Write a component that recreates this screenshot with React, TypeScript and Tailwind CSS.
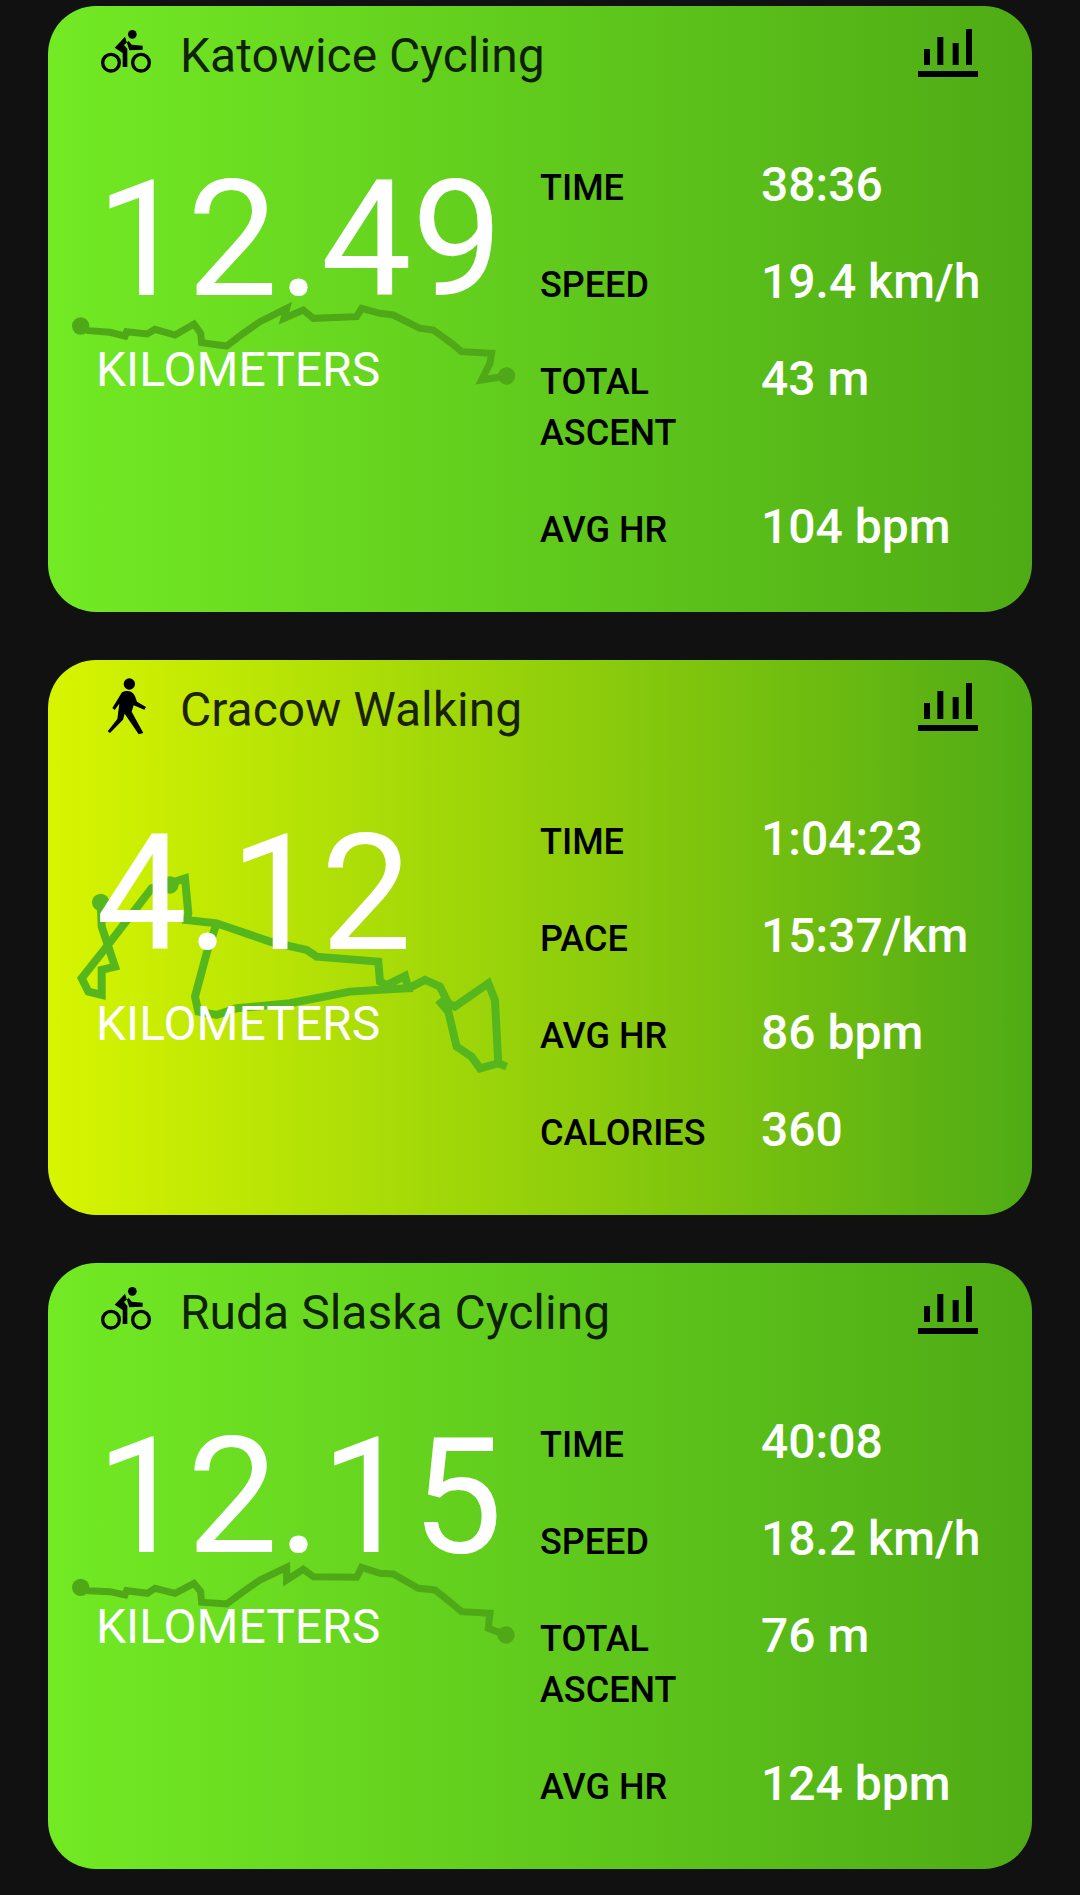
const roboto = "font-['Roboto',sans-serif]";

type Stat = { label: string[]; value: string };

interface ActivityProps {
  title: string;
  distance: string;
  kind: "bike" | "walk";
  stats: Stat[];
  route: React.ReactNode;
}

function BikeIcon() {
  return (
    <svg width={90} height={70} viewBox="0 0 270 210" className="shrink-0">
      <circle cx={93} cy={143} r={25} fill="none" stroke="#000" strokeWidth={10} />
      <circle cx={183} cy={143} r={25} fill="none" stroke="#000" strokeWidth={10} />
      <circle cx={157} cy={58} r={13} fill="#000" />
      <path
        d="M135 65 L104 98 L128 114 L128 156 L142 156 L142 102 L132 90 L146 78 L155 89 L188 92 L188 104 L148 106 Z"
        fill="#000"
      />
    </svg>
  );
}

function WalkIcon() {
  return (
    <span className="flex w-[90px] shrink-0 justify-center">
      <svg width={70} height={70} viewBox="0 0 210 210">
        <circle cx={118} cy={45} r={17} fill="#000" />
        <path
          d="M96 70 C110 62 129 65 135 82 L141 98 L168 114 L163 122 L131 109 L125 128 L160 192 L146 196 L104 134 L99 152 L60 192 L53 187 L82 150 L88 104 L74 123 L67 117 Z"
          fill="#000"
        />
      </svg>
    </span>
  );
}

function ChartIcon() {
  return (
    <svg width={90} height={70} viewBox="0 0 270 210" className="shrink-0">
      <rect x={72} y={102} width={18} height={48} fill="#000" />
      <rect x={112} y={66} width={18} height={84} fill="#000" />
      <rect x={158} y={84} width={18} height={66} fill="#000" />
      <rect x={198} y={42} width={18} height={108} fill="#000" />
      <rect x={54} y={168} width={180} height={18} fill="#000" />
    </svg>
  );
}

function ActivityCard({ title, distance, kind, stats, route }: ActivityProps) {
  return (
    <div
      className={
        "relative ml-[48px] w-[984px] overflow-hidden rounded-[48px] " +
        (kind === "bike"
          ? "bg-linear-to-r/srgb from-[#72ea24] to-[#4fab15]"
          : "bg-linear-to-r/srgb from-[#d8f500] to-[#4fab15]")
      }
    >
      {route}
      <div className="relative flex h-[99px] items-start pt-[9px] pl-[32px] pr-[42px]">
        {kind === "bike" ? <BikeIcon /> : <WalkIcon />}
        <div className="mt-[15px] ml-[10px] flex-1 text-[48px] leading-[52px] text-black/85">{title}</div>
        <ChartIcon />
      </div>
      <div className="relative flex pt-[58px] pb-[56px]">
        <div className="w-[492px] shrink-0 pl-[48px]">
          <div className="-mt-[7px] text-[162px] leading-[168px] font-normal text-white">{distance}</div>
          <div className="mt-[20px] text-[48px] leading-[52px] text-white">KILOMETERS</div>
        </div>
        <div className="grid grid-cols-[221px_1fr] gap-y-[46px]">
          {stats.map((s) => (
            <div key={s.value} className="contents">
              <div className="text-[36px] leading-[51px] font-medium text-black">
                {s.label.map((l) => (
                  <div key={l}>{l}</div>
                ))}
              </div>
              <div className="-mt-[4px] text-[48px] leading-[51px] font-medium text-white">{s.value}</div>
            </div>
          ))}
        </div>
      </div>
    </div>
  );
}

function RouteOne() {
  return (
    <svg className="absolute inset-0 h-full w-full" viewBox="0 0 984 606" preserveAspectRatio="xMinYMin">
      <g transform="translate(12 294) scale(0.3333)" fill="none" stroke="#4fa818" strokeWidth={21}>
        <polyline points="62,78 85,92 150,97 195,108 200,95 262,102 285,88 345,105 402,72 422,100 425,128 500,138 550,100 600,65 680,25 672,55 730,30 760,55 890,50 905,25 960,40 1000,45 1080,85 1120,90 1175,130 1205,155 1295,160 1290,190 1265,240 1340,228" />
        <circle cx={62} cy={78} r={26} fill="#4fa818" stroke="none" />
        <circle cx={1340} cy={228} r={26} fill="#4fa818" stroke="none" />
      </g>
    </svg>
  );
}

function RouteTwo() {
  return (
    <svg className="absolute inset-0 h-full w-full" viewBox="0 0 984 555" preserveAspectRatio="xMinYMin">
      <g transform="translate(-8 -10) scale(0.3333)" fill="none" stroke="#55b71d" strokeWidth={24}>
        <polyline points="182,757 185,830 225,950 185,960 185,1035 145,1025 125,985 200,890 335,715 390,700 435,685 445,790 440,810 530,820 690,875 800,900 830,920 1015,935 1020,995 1040,1005 1095,978 1105,1015 1045,1018 930,1025 750,1060 590,1075 530,1095 475,1085 465,1040 500,910 525,835 530,820" />
        <polyline points="1105,1015 1155,990 1200,1010 1225,1060 1245,1070 1345,1000 1365,1050 1375,1240 1320,1255 1295,1220 1250,1190 1225,1085 1195,1050" />
        <polyline points="1375,1240 1400,1250" />
        <circle cx={182} cy={757} r={26} fill="#55b71d" stroke="none" />
        <circle cx={390} cy={705} r={26} fill="#55b71d" stroke="none" />
      </g>
    </svg>
  );
}

function RouteThree() {
  return (
    <svg className="absolute inset-0 h-full w-full" viewBox="0 0 984 606" preserveAspectRatio="xMinYMin">
      <g transform="translate(12 297) scale(0.3333)" fill="none" stroke="#4fa818" strokeWidth={21}>
        <polyline points="62,82 85,92 150,95 195,105 200,92 262,100 285,85 345,100 402,70 422,95 425,127 500,132 550,95 600,60 680,22 680,60 730,28 760,50 890,52 905,22 960,40 1000,42 1075,85 1125,90 1175,130 1205,155 1290,160 1285,205 1338,225" />
        <circle cx={62} cy={82} r={26} fill="#4fa818" stroke="none" />
        <circle cx={1338} cy={225} r={26} fill="#4fa818" stroke="none" />
      </g>
    </svg>
  );
}

export default function App() {
  return (
    <div className={"flex h-[1895px] flex-col gap-[48px] overflow-hidden bg-[#111111] pt-[6px] " + roboto}>
      <ActivityCard
        title="Katowice Cycling"
        distance="12.49"
        kind="bike"
        route={<RouteOne />}
        stats={[
          { label: ["TIME"], value: "38:36" },
          { label: ["SPEED"], value: "19.4 km/h" },
          { label: ["TOTAL", "ASCENT"], value: "43 m" },
          { label: ["AVG HR"], value: "104 bpm" },
        ]}
      />
      <ActivityCard
        title="Cracow Walking"
        distance="4.12"
        kind="walk"
        route={<RouteTwo />}
        stats={[
          { label: ["TIME"], value: "1:04:23" },
          { label: ["PACE"], value: "15:37/km" },
          { label: ["AVG HR"], value: "86 bpm" },
          { label: ["CALORIES"], value: "360" },
        ]}
      />
      <ActivityCard
        title="Ruda Slaska Cycling"
        distance="12.15"
        kind="bike"
        route={<RouteThree />}
        stats={[
          { label: ["TIME"], value: "40:08" },
          { label: ["SPEED"], value: "18.2 km/h" },
          { label: ["TOTAL", "ASCENT"], value: "76 m" },
          { label: ["AVG HR"], value: "124 bpm" },
        ]}
      />
    </div>
  );
}
